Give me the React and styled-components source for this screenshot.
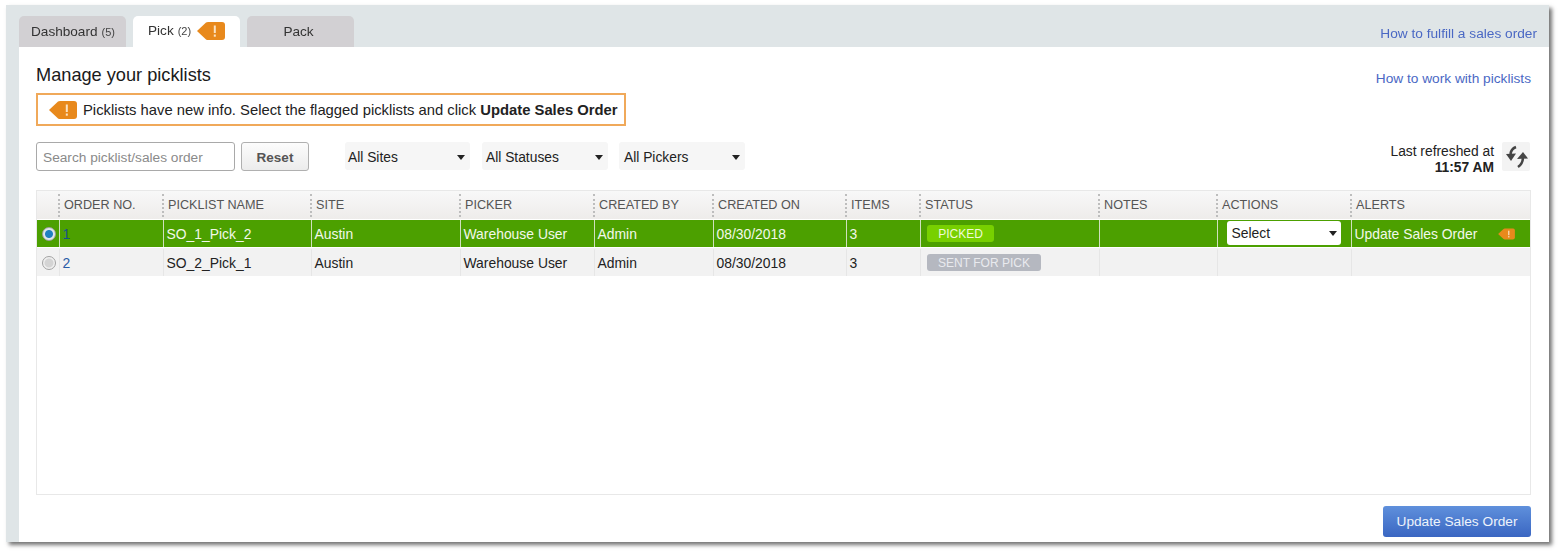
import React from "react";
import styled, { createGlobalStyle } from "styled-components";

const Global = createGlobalStyle`
  html, body { margin: 0; padding: 0; background: #fff; }
  body { font-family: "Liberation Sans", Arial, sans-serif; color: #222; }
  * { box-sizing: border-box; }
`;

const Page = styled.div`
  width: 1562px;
  height: 554px;
  padding: 5px 13px 12px 6px;
  overflow: hidden;
  filter: blur(0.4px);
`;
const Shell = styled.div`
  height: 537px;
  background: #dfe5e7;
  padding: 11px 0 0 13px;
  display: flex;
  flex-direction: column;
  box-shadow: 3px 3px 4px rgba(70, 70, 70, 0.75);
`;
const TabBar = styled.div`
  height: 31px;
  display: flex;
  gap: 7px;
  position: relative;
`;
const Tab = styled.div`
  width: ${(p) => p.$w}px;
  height: 31px;
  border-radius: 5px 5px 0 0;
  background: ${(p) => (p.$active ? "#fff" : "#d2d0d3")};
  display: flex;
  align-items: center;
  justify-content: ${(p) => (p.$center ? "center" : "flex-start")};
  padding: ${(p) => (p.$center ? "0 4px 1px 0" : `0 0 ${p.$active ? 2 : 1}px ${p.$pad}px`)};
  font-size: 13.6px;
  color: #333;
`;
const Count = styled.span`
  font-size: 11px;
  margin-left: 4px;
  margin-top: 1px;
  color: #444;
`;
const TopLink = styled.a`
  margin-left: auto;
  margin-right: 12px;
  margin-top: 10px;
  font-size: 13.7px;
  line-height: 16px;
  color: #4a68c4;
`;
const Body = styled.div`
  flex: 1;
  background: #fff;
  padding: 17px 18px 0 17px;
  display: flex;
  flex-direction: column;
`;
const TitleRow = styled.div`
  display: flex;
  justify-content: space-between;
  height: 24px;
`;
const Title = styled.h1`
  margin: 0;
  font-size: 18.2px;
  line-height: 22px;
  font-weight: 400;
  color: #1a1a1a;
`;
const HelpLink = styled.a`
  font-size: 13.7px;
  line-height: 16px;
  margin-top: 7px;
  color: #4a68c4;
`;
const Notice = styled.div`
  width: 590px;
  height: 33px;
  margin-top: 5px;
  border: 2px solid #f0a95a;
  display: flex;
  align-items: center;
  padding-left: 11px;
  font-size: 14.8px;
  color: #222;
  gap: 6px;
`;
const Filters = styled.div`
  display: flex;
  align-items: flex-start;
  margin-top: 16px;
  height: 48px;
`;
const Search = styled.div`
  width: 199px;
  height: 29px;
  border: 1px solid #a9a9a9;
  border-radius: 3px;
  font-size: 13.7px;
  color: #8a8a8a;
  display: flex;
  align-items: center;
  padding: 1px 0 0 6px;
`;
const Reset = styled.div`
  width: 68px;
  height: 29px;
  margin-left: 6px;
  padding-top: 1px;
  border: 1px solid #b0b0b0;
  border-radius: 3px;
  background: linear-gradient(#fcfcfc, #ececec);
  font-size: 13.5px;
  font-weight: 700;
  color: #555;
  display: flex;
  align-items: center;
  justify-content: center;
`;
const Drop = styled.div`
  width: ${(p) => p.$w}px;
  height: 28px;
  margin-left: ${(p) => p.$ml}px;
  background: #f6f6f6;
  border-radius: 3px;
  font-size: 13.8px;
  color: #222;
  display: flex;
  align-items: center;
  justify-content: space-between;
  padding: 2px 5px 0 ${(p) => p.$pad}px;
`;
const Caret = styled.i`
  width: 0;
  height: 0;
  border-left: 4.5px solid transparent;
  border-right: 4.5px solid transparent;
  border-top: 5px solid #222;
`;
const Refreshed = styled.div`
  margin-left: auto;
  display: flex;
  gap: 8px;
  align-items: flex-start;
  margin-right: 1px;
`;
const RefreshText = styled.div`
  text-align: right;
  font-size: 13.8px;
  line-height: 16px;
  margin-top: 2px;
  color: #222;
  b { display: block; font-weight: 700; }
`;
const RefreshBtn = styled.div`
  width: 28px;
  height: 29px;
  background: #f3f3f3;
  border-radius: 2px;
  display: flex;
  align-items: center;
  justify-content: center;
`;
const Table = styled.div`
  width: 1495px;
  height: 305px;
  border: 1px solid #e8e8e8;
`;
const cols = "21.5px 104px 148px 149px 134px 119px 133px 74px 179px 118px 134px 179.5px";
const Header = styled.div`
  display: grid;
  grid-template-columns: ${cols};
  height: 28px;
  background: linear-gradient(#f8f8f8, #eeecea);
`;
const Th = styled.div`
  font-size: 12.65px;
  color: #555;
  display: flex;
  align-items: center;
  padding-left: 5.5px;
  position: relative;
  &::before {
    content: "";
    display: ${(p) => (p.$first ? "none" : "block")};
    position: absolute;
    left: -1px;
    top: 3px;
    bottom: 2px;
    border-left: 2px dotted #bdbdbd;
  }
`;
const Row = styled.div`
  display: grid;
  grid-template-columns: ${cols};
  height: ${(p) => p.$h}px;
  margin-top: 1px;
  padding-top: ${(p) => (p.$on ? 0 : 1)}px;
  background: ${(p) => (p.$on ? "#4ca000" : "#f2f2f2")};
  color: ${(p) => (p.$on ? "#f2f8ea" : "#222")};
  font-size: 13.9px;
`;
const Td = styled.div`
  display: flex;
  align-items: center;
  padding-left: ${(p) => p.$pad ?? 3}px;
  border-left: ${(p) => (p.$first ? "0" : `1px solid ${p.$on ? "#cfe0bd" : "#e6e6e6"}`)};
  color: ${(p) => p.$color || "inherit"};
`;
const Radio = styled.span`
  width: 14px;
  height: 14px;
  margin-left: 1px;
  border-radius: 50%;
  border: 1px solid #a2a2a2;
  background: ${(p) =>
    p.$on
      ? "radial-gradient(circle, #1f7fc0 0 3.5px, #dfe6ea 4.5px)"
      : "radial-gradient(circle, #d4d4d4 0 4px, #f0f0f0 5px)"};
`;
const Badge = styled.span`
  margin-left: 3.5px;
  height: 17px;
  width: ${(p) => p.$w}px;
  border-radius: 3px;
  background: ${(p) => p.$bg};
  color: ${(p) => p.$fg};
  font-size: 12px;
  display: flex;
  align-items: center;
  justify-content: center;
`;
const ActionSelect = styled.div`
  width: 114px;
  height: 24px;
  margin-left: 6px;
  margin-top: -1px;
  background: #fff;
  border-radius: 3px;
  color: #222;
  display: flex;
  align-items: center;
  justify-content: space-between;
  padding: 0 4px 0 5px;
`;
const Alert = styled.div`
  width: 100%;
  display: flex;
  align-items: center;
  justify-content: space-between;
  padding-right: 15px;
`;
const Footer = styled.div`
  display: flex;
  justify-content: flex-end;
  margin-top: 11px;
`;
const Primary = styled.div`
  width: 148px;
  height: 31px;
  border-radius: 3px;
  background: linear-gradient(#5f90dc, #3a66c2);
  color: #eef3fb;
  font-size: 13.7px;
  display: flex;
  align-items: center;
  justify-content: center;
`;

const Flag = ({ w = 28, h = 20, style }) => (
  <svg width={w} height={h} viewBox="0 0 28 20" style={style}>
    <path d="M0 10 L9 1.5 Q10 1 11 1 L25 1 Q28 1 28 4 L28 16 Q28 19 25 19 L11 19 Q10 19 9 18.5 Z" fill="#e8891c" />
    <rect x="16.8" y="4.5" width="2" height="7.5" fill="#fbe3c4" />
    <rect x="16.8" y="13.5" width="2" height="2.2" fill="#fbe3c4" />
  </svg>
);

const RefreshIcon = () => (
  <svg width="28" height="29" viewBox="0 0 28 29">
    <path d="M4 12 L14 11.5 L9 19 Z" fill="#444" />
    <path d="M14 5 Q9 7 8.5 12" fill="none" stroke="#444" strokeWidth="2.6" />
    <path d="M15 17 L26 16.5 L21 10 Z" fill="#444" />
    <path d="M21 16 Q20.5 22 16 25" fill="none" stroke="#444" strokeWidth="2.6" />
  </svg>
);

const headers = ["", "ORDER NO.", "PICKLIST NAME", "SITE", "PICKER", "CREATED BY", "CREATED ON", "ITEMS", "STATUS", "NOTES", "ACTIONS", "ALERTS"];

export default function App() {
  return (
    <Page>
      <Global />
      <Shell>
        <TabBar>
          <Tab $w={107} $pad={12}>Dashboard<Count>(5)</Count></Tab>
          <Tab $w={107} $active $pad={15}>
            Pick<Count>(2)</Count>
            <Flag style={{ marginLeft: 6 }} />
          </Tab>
          <Tab $w={107} $center>Pack</Tab>
          <TopLink>How to fulfill a sales order</TopLink>
        </TabBar>
        <Body>
          <TitleRow>
            <Title>Manage your picklists</Title>
            <HelpLink>How to work with picklists</HelpLink>
          </TitleRow>
          <Notice>
            <Flag />
            <span>Picklists have new info. Select the flagged picklists and click <b>Update Sales Order</b></span>
          </Notice>
          <Filters>
            <Search>Search picklist/sales order</Search>
            <Reset>Reset</Reset>
            <Drop $w={125} $ml={36} $pad={3}>All Sites<Caret /></Drop>
            <Drop $w={126} $ml={12} $pad={4}>All Statuses<Caret /></Drop>
            <Drop $w={126} $ml={11} $pad={5}>All Pickers<Caret /></Drop>
            <Refreshed>
              <RefreshText>Last refreshed at<b>11:57 AM</b></RefreshText>
              <RefreshBtn><RefreshIcon /></RefreshBtn>
            </Refreshed>
          </Filters>
          <Table>
            <Header>
              {headers.map((h, i) => <Th key={i} $first={i === 0}>{h}</Th>)}
            </Header>
            <Row $on $h={27}>
              <Td $first $pad={3.5}><Radio $on /></Td>
              <Td $on $color="#17508c">1</Td>
              <Td $on>SO_1_Pick_2</Td>
              <Td $on>Austin</Td>
              <Td $on>Warehouse User</Td>
              <Td $on>Admin</Td>
              <Td $on>08/30/2018</Td>
              <Td $on>3</Td>
              <Td $on><Badge $w={67} $bg="#78d000" $fg="#eefbd8">PICKED</Badge></Td>
              <Td $on />
              <Td $on $pad={3}><ActionSelect>Select<Caret /></ActionSelect></Td>
              <Td $on>
                <Alert>Update Sales Order<Flag w={17} h={12} /></Alert>
              </Td>
            </Row>
            <Row $h={28}>
              <Td $first $pad={3.5}><Radio /></Td>
              <Td $color="#2a5ca8">2</Td>
              <Td>SO_2_Pick_1</Td>
              <Td>Austin</Td>
              <Td>Warehouse User</Td>
              <Td>Admin</Td>
              <Td>08/30/2018</Td>
              <Td>3</Td>
              <Td><Badge $w={114} $bg="#b5b8c0" $fg="#e9eaee">SENT FOR PICK</Badge></Td>
              <Td />
              <Td />
              <Td />
            </Row>
          </Table>
          <Footer>
            <Primary>Update Sales Order</Primary>
          </Footer>
        </Body>
      </Shell>
    </Page>
  );
}
